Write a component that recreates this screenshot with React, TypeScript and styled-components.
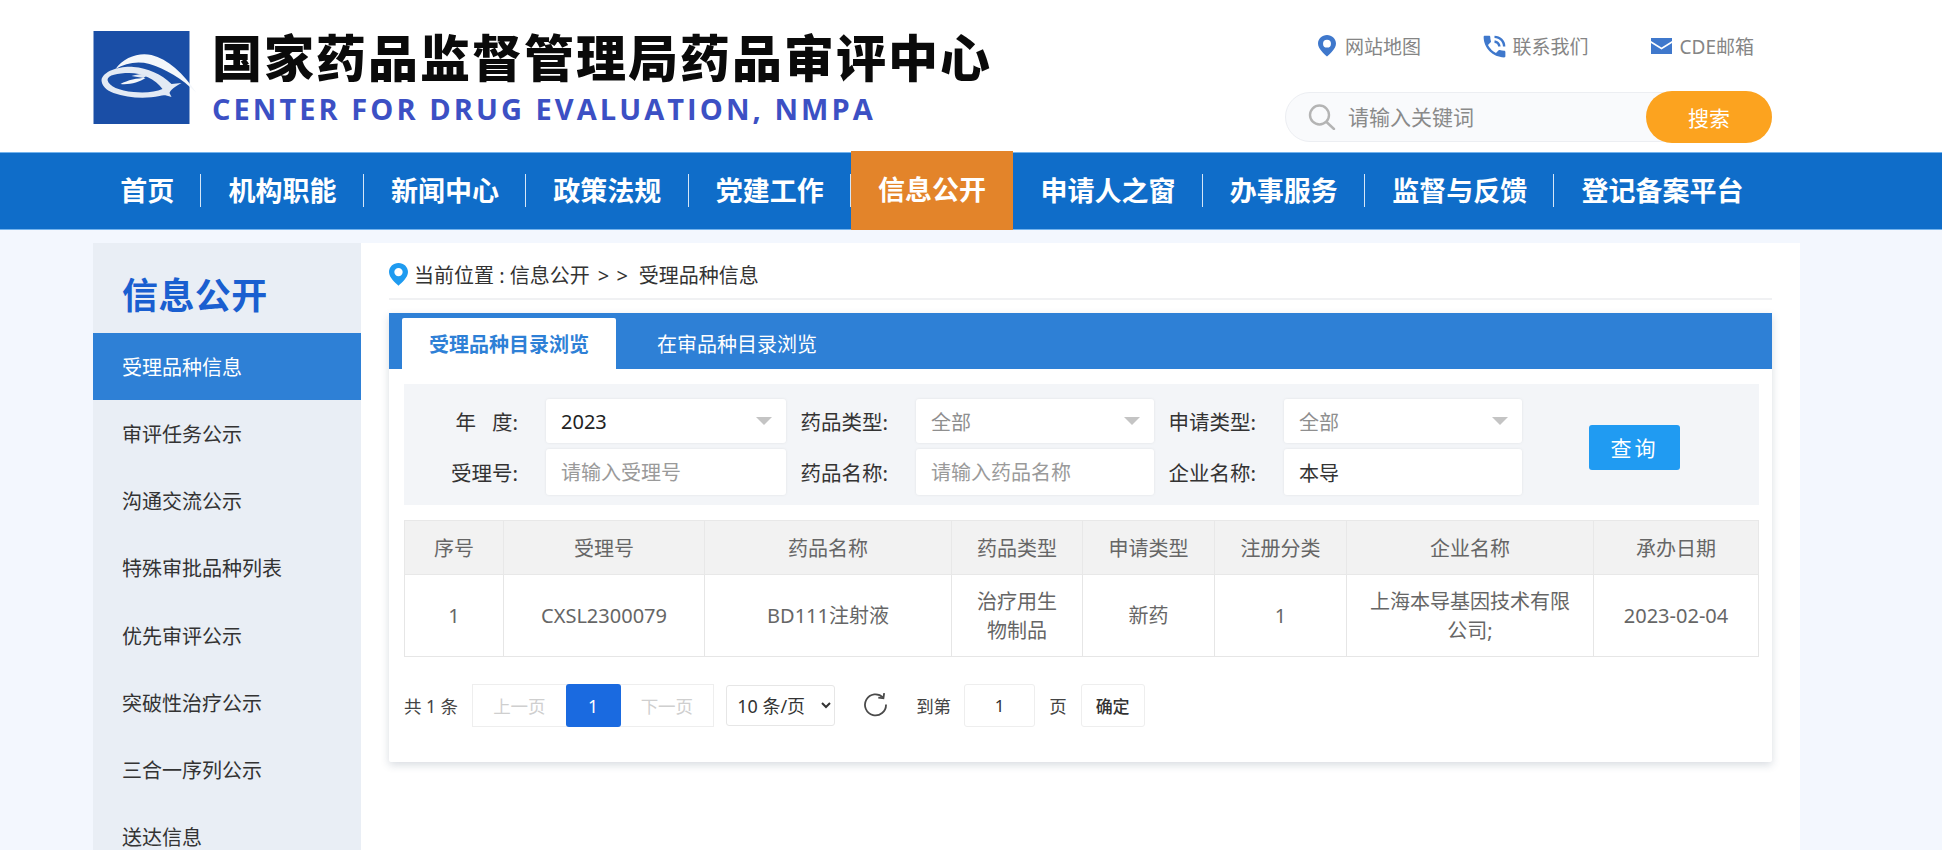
import React from 'react';
import styled, { createGlobalStyle } from 'styled-components';
import { MdPhoneInTalk } from 'react-icons/md';

const navItems = ['首页', '机构职能', '新闻中心', '政策法规', '党建工作', '信息公开', '申请人之窗', '办事服务', '监督与反馈', '登记备案平台'];
const sideItems = ['受理品种信息', '审评任务公示', '沟通交流公示', '特殊审批品种列表', '优先审评公示', '突破性治疗公示', '三合一序列公示', '送达信息'];
const columns = [
  { title: '序号', width: 99 },
  { title: '受理号', width: 201 },
  { title: '药品名称', width: 247 },
  { title: '药品类型', width: 131 },
  { title: '申请类型', width: 132 },
  { title: '注册分类', width: 132 },
  { title: '企业名称', width: 247 },
  { title: '承办日期', width: 165 },
];
const row = ['1', 'CXSL2300079', 'BD111注射液', '治疗用生物制品', '新药', '1', '上海本导基因技术有限公司;', '2023-02-04'];

const LogoMark = () => (
  <LogoSvg viewBox="0 0 96 93">
    <defs>
      <filter id="soft"><feGaussianBlur stdDeviation="0.5" /></filter>
    </defs>
    <rect width="96" height="93" fill="#1a4ea6" />
    <g filter="url(#soft)">
      <path d="M22 38C30 26 46 21 58 24C74 28 90 42 103 62C88 47 72 38 56 33C44 30 32 32 22 38Z" fill="#f4f7fb" />
      <path d="M8 49C10 40 26 35 40 36C54 37 68 43 78 53L88 52C82 55 77 59 76 62L78 66C72 64 70 64 66 65C52 68 34 67 20 62C12 59 8 54 8 49ZM14 49C15 55 26 60 40 61C52 62 62 61 69 58C62 48 48 42 36 42C24 42 14 44 14 49Z" fill="#e3eaf4" />
      <path d="M27 53C34 49 44 47 52 47C46 51 36 54 27 53Z" fill="#f4f7fb" />
      <path d="M38 45C44 43 50 43 54 44L50 47C46 46 42 46 38 45Z" fill="#dfe7f3" />
    </g>
  </LogoSvg>
);

const PinIcon = ({ color, size }: { color: string; size: number }) => (
  <svg width={size} height={size * 1.2} viewBox="0 0 20 24">
    <path fillRule="evenodd" d="M10 0C4.5 0 0 4.2 0 9.5C0 15.5 7 21 10 24C13 21 20 15.5 20 9.5C20 4.2 15.5 0 10 0ZM10 5.2A4.4 4.4 0 1 1 10 14A4.4 4.4 0 0 1 10 5.2Z" fill={color} />
  </svg>
);

const MailIcon = () => (
  <svg width="21" height="16" viewBox="0 0 21 16">
    <path d="M0 0H21V3L10.5 9.5L0 3Z" fill="#3f78cc" />
    <path d="M0 5L10.5 11.5L21 5V16H0Z" fill="#3f78cc" />
  </svg>
);

const SearchIcon = () => (
  <svg width="28" height="26" viewBox="0 0 28 26" fill="none" stroke="#b4b4b4" strokeWidth="2.4">
    <circle cx="11.5" cy="11" r="9.5" />
    <path d="M18.5 18L26 25" strokeLinecap="round" />
  </svg>
);

const RefreshIcon = () => (
  <svg width="25" height="25" viewBox="0 0 25 25" fill="none" stroke="#4a4a4a" strokeWidth="1.8">
    <path d="M20 5.5A10.5 10.5 0 1 0 23 12.5" />
    <path d="M20.6 1V6.2H15.4" transform="rotate(8 20 5)" />
  </svg>
);

export default function App() {
  return (
    <Page>
      <GlobalStyle />
      <Header>
        <Brand>
          <LogoMark />
          <BrandText>
            <BrandTitle>国家药品监督管理局药品审评中心</BrandTitle>
            <BrandSub>CENTER FOR DRUG EVALUATION, NMPA</BrandSub>
          </BrandText>
        </Brand>
        <Tools>
          <TopLinks>
            <TopLink><PinIcon color="#3f78cc" size={18} />网站地图</TopLink>
            <TopLink><PhoneIcon size={29} color="#3f78cc" />联系我们</TopLink>
            <TopLink $tight><MailIcon />CDE邮箱</TopLink>
          </TopLinks>
          <SearchBox>
            <SearchIcon />
            <SearchInput placeholder="请输入关键词" />
            <SearchButton>搜索</SearchButton>
          </SearchBox>
        </Tools>
      </Header>

      <NavBar>
        {navItems.map((item, i) => (
          <NavItem key={item} $active={item === '信息公开'} $last={i === navItems.length - 1}>
            {item}
          </NavItem>
        ))}
      </NavBar>

      <Main>
        <Sidebar>
          <SideTitle>信息公开</SideTitle>
          {sideItems.map((item, i) => (
            <SideItem key={item} $active={i === 0}>{item}</SideItem>
          ))}
        </Sidebar>

        <Panel>
          <Breadcrumb>
            <PinIcon color="#1f9bf0" size={19} />
            <span>当前位置 : 信息公开<CrumbSep>&gt; &gt;</CrumbSep>受理品种信息</span>
          </Breadcrumb>

          <Card>
            <Tabs>
              <Tab $active>受理品种目录浏览</Tab>
              <Tab>在审品种目录浏览</Tab>
            </Tabs>

            <Filter>
              <FilterLabel>年&nbsp;&nbsp;&nbsp;度:</FilterLabel>
              <Picker $filled>2023<Caret /></Picker>
              <FilterLabel>药品类型:</FilterLabel>
              <Picker>全部<Caret /></Picker>
              <FilterLabel>申请类型:</FilterLabel>
              <Picker>全部<Caret /></Picker>
              <QueryButton>查询</QueryButton>
              <FilterLabel>受理号:</FilterLabel>
              <FilterInput placeholder="请输入受理号" />
              <FilterLabel>药品名称:</FilterLabel>
              <FilterInput placeholder="请输入药品名称" />
              <FilterLabel>企业名称:</FilterLabel>
              <FilterInput defaultValue="本导" />
            </Filter>

            <Table>
              <colgroup>
                {columns.map(c => <col key={c.title} width={c.width} />)}
              </colgroup>
              <thead>
                <tr>{columns.map(c => <Th key={c.title}>{c.title}</Th>)}</tr>
              </thead>
              <tbody>
                <tr>{row.map((cell, i) => <Td key={i}>{cell}</Td>)}</tr>
              </tbody>
            </Table>

            <Pager>
              <PagerText>共 1 条</PagerText>
              <PageGroup>
                <PageStep>上一页</PageStep>
                <PageCurrent>1</PageCurrent>
                <PageStep>下一页</PageStep>
              </PageGroup>
              <SizeSelect defaultValue="10">
                <option value="10">10 条/页</option>
                <option value="20">20 条/页</option>
              </SizeSelect>
              <RefreshButton><RefreshIcon /></RefreshButton>
              <PagerText>到第</PagerText>
              <JumpInput defaultValue="1" />
              <PagerText>页</PagerText>
              <ConfirmButton>确定</ConfirmButton>
            </Pager>
          </Card>
        </Panel>
      </Main>
    </Page>
  );
}

// --- Styled Components ---

const GlobalStyle = createGlobalStyle`
  html, body {
    margin: 0;
    padding: 0;
    height: 100%;
    overflow: hidden;
    background: #ffffff;
  }
  * {
    box-sizing: border-box;
  }
  body, input, select, button {
    font-family: "Noto Sans", "Noto Sans CJK SC", sans-serif;
  }
`;

const Page = styled.div`
  height: 850px;
  display: flex;
  flex-direction: column;
  background: #ffffff;
  color: #333;
`;

// Header
const Header = styled.header`
  height: 152px;
  padding: 0 170px 0 93px;
  display: flex;
  justify-content: space-between;
  flex-shrink: 0;
`;

const Brand = styled.div`
  display: flex;
  align-items: flex-start;
  gap: 22px;
  padding-top: 31px;
`;

const LogoSvg = styled.svg`
  width: 97px;
  height: 93px;
  overflow: visible;
`;

const BrandText = styled.div`
  display: flex;
  flex-direction: column;
`;

const BrandTitle = styled.h1`
  margin: -7px 0 0;
  font-family: "Noto Sans CJK SC", sans-serif;
  font-size: 50px;
  line-height: 62px;
  font-weight: 900;
  letter-spacing: 2px;
  color: #0a0a0a;
  white-space: nowrap;
`;

const BrandSub = styled.div`
  margin-top: 5px;
  font-family: "Open Sans", sans-serif;
  font-size: 29px;
  line-height: 36px;
  font-weight: 700;
  letter-spacing: 3.05px;
  color: #3c50c4;
  white-space: nowrap;
`;

const Tools = styled.div`
  width: 487px;
  display: flex;
  flex-direction: column;
  align-items: flex-start;
`;

const TopLinks = styled.div`
  margin: 32px 0 0 33px;
  height: 28px;
  display: flex;
  gap: 62px;
`;

const TopLink = styled.a<{ $tight?: boolean }>`
  display: flex;
  align-items: center;
  gap: ${p => (p.$tight ? 8 : 9)}px;
  font-size: 19px;
  color: #858585;
  white-space: nowrap;
`;

const PhoneIcon = styled(MdPhoneInTalk)`
  margin: 0 -5px 0 -3.5px;
`;

const SearchBox = styled.div`
  margin-top: 32px;
  width: 487px;
  height: 50px;
  padding-left: 22px;
  display: flex;
  align-items: center;
  gap: 10px;
  background: #f9fafc;
  border: 1px solid #eceef2;
  border-radius: 25px;
`;

const SearchInput = styled.input`
  flex: 1;
  min-width: 0;
  border: none;
  outline: none;
  background: none;
  font-size: 21px;
  color: #333;

  &::placeholder {
    color: #8a8a8a;
  }
`;

const SearchButton = styled.button`
  width: 126px;
  height: 52px;
  margin-right: -1px;
  border: none;
  border-radius: 26px;
  background: #fca31f;
  color: #ffffff;
  font-size: 21px;
`;

// Nav
const NavBar = styled.nav`
  height: 78px;
  flex-shrink: 0;
  padding-left: 93px;
  display: flex;
  align-items: stretch;
  background: #0f6dc9;
  border-top: 1px solid #74b3ec;
  border-bottom: 1px solid #74b3ec;
`;

const NavItem = styled.a<{ $active?: boolean; $last?: boolean }>`
  position: relative;
  display: flex;
  align-items: center;
  padding: 0 27.2px 4px;
  font-size: 27px;
  font-weight: 700;
  color: #ffffff;
  white-space: nowrap;
  ${p => p.$active && `
    margin: -2px 0 -1px;
    background: #e3842a;
  `}

  &::after {
    content: '';
    display: ${p => (p.$last || p.$active ? 'none' : 'block')};
    position: absolute;
    right: 0;
    top: 21px;
    height: 33px;
    width: 1px;
    background: #d5e6f7;
  }
`;

// Main
const Main = styled.main`
  flex: 1;
  min-height: 0;
  padding: 13px 142px 0 93px;
  display: flex;
  background: #f3f7fe;
`;

const Sidebar = styled.aside`
  width: 268px;
  flex-shrink: 0;
  background: #e9eef5;
`;

const SideTitle = styled.h2`
  margin: 0;
  height: 90px;
  padding: 10px 0 0 29px;
  display: flex;
  align-items: center;
  font-size: 36px;
  font-weight: 700;
  letter-spacing: 0.4px;
  color: #1a5fd0;
`;

const SideItem = styled.a<{ $active?: boolean }>`
  display: flex;
  align-items: center;
  height: 67.15px;
  padding-left: 29px;
  font-size: 20px;
  color: ${p => (p.$active ? '#ffffff' : '#333333')};
  background: ${p => (p.$active ? '#2e80d6' : 'transparent')};
`;

const Panel = styled.section`
  flex: 1;
  min-width: 0;
  padding: 0 28px;
  background: #ffffff;
`;

const Breadcrumb = styled.div`
  height: 57px;
  padding-top: 8px;
  display: flex;
  align-items: center;
  gap: 6px;
  font-size: 20px;
  color: #333;
  border-bottom: 2px solid #f0f1f3;
`;

const CrumbSep = styled.span`
  margin: 0 11px 0 8px;
  word-spacing: 2px;
`;

const Card = styled.div`
  margin-top: 13px;
  height: 449px;
  background: #ffffff;
  box-shadow: 0 3px 8px rgba(40, 60, 90, 0.18);
  border-radius: 2px;
`;

const Tabs = styled.div`
  height: 56px;
  padding: 5px 0 0 13px;
  display: flex;
  gap: 14px;
  background: #2e80d6;
`;

const Tab = styled.div<{ $active?: boolean }>`
  display: flex;
  align-items: center;
  padding: 0 27px;
  font-size: 20px;
  font-weight: ${p => (p.$active ? 700 : 400)};
  color: ${p => (p.$active ? '#2e80d6' : '#ffffff')};
  background: ${p => (p.$active ? '#ffffff' : 'transparent')};
  border-radius: 2px 2px 0 0;
`;

const Filter = styled.div`
  margin: 15px 13px 0 15px;
  height: 121px;
  padding-top: 15px;
  display: grid;
  grid-template-columns: 142px 240px 130px 238px 130px 238px 91px;
  grid-template-rows: 44px 46px;
  row-gap: 6px;
  column-gap: 0;
  background: #f3f5f8;
`;

const FilterLabel = styled.label`
  display: flex;
  align-items: center;
  justify-content: flex-end;
  padding-right: 28px;
  font-size: 20.5px;
  color: #333;
  white-space: nowrap;
`;

const Picker = styled.div<{ $filled?: boolean }>`
  position: relative;
  display: flex;
  align-items: center;
  padding-left: 15px;
  background: #ffffff;
  border-radius: 3px;
  box-shadow: 0 0 3px rgba(0, 0, 0, 0.08);
  font-size: 20px;
  color: ${p => (p.$filled ? '#222222' : '#8f8f8f')};
`;

const Caret = styled.i`
  position: absolute;
  right: 14px;
  top: 18px;
  width: 0;
  height: 0;
  border-left: 8px solid transparent;
  border-right: 8px solid transparent;
  border-top: 8px solid #c4c4c4;
`;

const FilterInput = styled.input`
  min-width: 0;
  padding: 0 15px;
  border: none;
  outline: none;
  background: #ffffff;
  border-radius: 3px;
  box-shadow: 0 0 3px rgba(0, 0, 0, 0.08);
  font-size: 20px;
  color: #333;

  &::placeholder {
    color: #9a9a9a;
  }
`;

const QueryButton = styled.button`
  grid-column: 7;
  grid-row: 1 / span 2;
  align-self: center;
  margin-left: 67px;
  width: 91px;
  height: 45px;
  padding-top: 1px;
  border: none;
  border-radius: 3px;
  background: #209bf2;
  color: #ffffff;
  font-size: 21px;
  letter-spacing: 3px;
  white-space: nowrap;
`;

// Table
const Table = styled.table`
  margin: 15px 0 0 15px;
  width: 1354px;
  table-layout: fixed;
  border-collapse: collapse;
  font-size: 20px;
  color: #666;
`;

const Th = styled.th`
  height: 54px;
  font-weight: 400;
  background: #f2f2f2;
  border: 1px solid #e8e8e8;
`;

const Td = styled.td`
  height: 82px;
  padding: 0 18px;
  line-height: 29px;
  text-align: center;
  border: 1px solid #e6e6e6;
`;

// Pager
const Pager = styled.div`
  margin: 27px 0 0 15px;
  height: 43px;
  display: flex;
  align-items: center;
  font-size: 17.5px;
  color: #444;
`;

const PagerText = styled.span`
  white-space: nowrap;
  & + div {
    margin-left: 14px;
  }
`;

const PageGroup = styled.div`
  height: 43px;
  display: flex;
  border: 1px solid #eeeeee;
`;

const PageStep = styled.span`
  width: 92.5px;
  display: flex;
  align-items: center;
  justify-content: center;
  color: #cfcfcf;
`;

const PageCurrent = styled.span`
  width: 55px;
  margin: -1px 0;
  display: flex;
  align-items: center;
  justify-content: center;
  background: #1a6ae0;
  border-radius: 3px;
  color: #ffffff;
`;

const SizeSelect = styled.select`
  margin-left: 12px;
  width: 109px;
  height: 41px;
  padding: 0 4px 0 6px;
  border: 1px solid #e6e6e6;
  border-radius: 3px;
  background: #ffffff;
  font-size: 18px;
  color: #333;
`;

const RefreshButton = styled.span`
  margin: -2px 28px 0 28px;
  display: flex;
`;

const JumpInput = styled.input`
  margin: 0 14px 0 13px;
  width: 71px;
  height: 43px;
  border: 1px solid #eeeeee;
  border-radius: 3px;
  outline: none;
  text-align: center;
  font-size: 17px;
  color: #333;
`;

const ConfirmButton = styled.button`
  margin-left: 14px;
  width: 64px;
  height: 43px;
  border: 1px solid #eeeeee;
  border-radius: 3px;
  background: #ffffff;
  font-size: 17px;
  font-weight: 500;
  color: #333;
`;
